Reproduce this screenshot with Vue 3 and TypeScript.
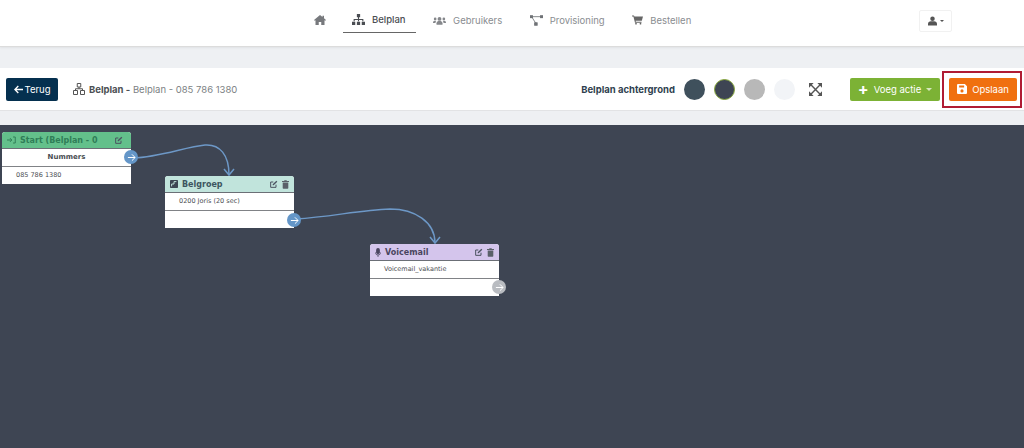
<script setup lang="ts">
const navItems = [
  { key: 'sitemap', label: 'Belplan', active: true },
  { key: 'users', label: 'Gebruikers', active: false },
  { key: 'prov', label: 'Provisioning', active: false },
  { key: 'cart', label: 'Bestellen', active: false },
]
const swatches = [
  { color: '#3f505c', ring: false },
  { color: '#3e4553', ring: true },
  { color: '#b8b8b8', ring: false },
  { color: '#f2f4f7', ring: false },
]
const nodes = [
  { id: 'start', cls: 'n-start', title: 'Start (Belplan - 0', x: 2, y: 7, trash: false, rows: ['Nummers', '085 786 1380'], port: 'blue', portY: 25 },
  { id: 'group', cls: 'n-group', title: 'Belgroep', x: 165, y: 51, trash: true, rows: ['0200 Joris (20 sec)', ''], port: 'blue', portY: 44 },
  { id: 'vm', cls: 'n-vm', title: 'Voicemail', x: 370, y: 119, trash: true, rows: ['Voicemail_vakantie', ''], port: 'grey', portY: 43 },
]
</script>

<template>
  <div class="page">
    <header class="nav">
      <div class="nav-items">
        <svg class="home" viewBox="0 0 24 20" width="12" height="10"><path fill="#77797d" d="M12 0 0 10l1.400 1.600L3 10.300V20h6.500v-6h5v6H21v-9.700l1.600 1.300L24 10l-4-3.300V1.500h-3v2.700z"/></svg>
        <a v-for="item in navItems" :key="item.key" class="nav-item" :class="{ active: item.active }">
          <svg v-if="item.key === 'sitemap'" viewBox="0 0 24 20" width="13" height="11"><path fill="#4a4d52" d="M9 0h6v6h-6zM11 6h2v3h8v4h-2v-2h-6v2h-2v-2H5v2H3V9h8zM0 14h6v6H0zM9 14h6v6H9zM18 14h6v6h-6z"/></svg>
          <svg v-else-if="item.key === 'users'" viewBox="0 0 24 16" width="13" height="9"><g fill="#85878b"><circle cx="12" cy="5" r="3.600"/><path d="M6.500 16v-3c0-3 2.500-4 5.500-4s5.500 1 5.500 4v3z"/><circle cx="4" cy="5" r="2.500"/><circle cx="20" cy="5" r="2.500"/><path d="M0 12c0-2.500 1.500-3.500 4-3.500 1 0 1.600.2 2 .5-1 1-1.400 2-1.400 3.500H0zM24 12c0-2.500-1.500-3.500-4-3.500-1 0-1.600.2-2 .5 1 1 1.400 2 1.400 3.500H24z"/></g></svg>
          <svg v-else-if="item.key === 'prov'" viewBox="0 0 22 18" width="13" height="11"><g fill="#6f7276"><rect x="0" y="0" width="5" height="5"/><rect x="17" y="0" width="5" height="5"/><rect x="7" y="12" width="6" height="6" rx="1"/></g><path d="M3 2.500h16M3 3l7 11" stroke="#6f7276" stroke-width="1.400" fill="none"/></svg>
          <svg v-else viewBox="0 0 22 18" width="11" height="10"><path fill="#666" d="M0 0h4l.8 2H22l-2.400 8.500H7.200l.5 2H19v2H6L2.800 2H0z"/><circle cx="8" cy="16.300" r="1.700" fill="#666"/><circle cx="17" cy="16.300" r="1.700" fill="#666"/></svg>
          <span>{{ item.label }}</span>
        </a>
      </div>
      <div class="user-btn">
        <svg viewBox="0 0 14 14" width="9" height="10"><circle cx="7" cy="3.500" r="3.500" fill="#555"/><path fill="#555" d="M0 14v-2.500C0 9 2 7.500 4.500 7.500h5C12 7.500 14 9 14 11.500V14z"/></svg>
        <span class="caret small"></span>
      </div>
    </header>

    <section class="toolbar">
      <button class="back">
        <svg viewBox="0 0 10 10" width="9" height="9"><path fill="none" stroke="#fff" stroke-width="1.500" d="M10 5H1M4.800 1.200 1 5l3.800 3.800"/></svg>
        Terug
      </button>
      <svg class="net" viewBox="0 0 24 24" width="12" height="12"><path fill="none" stroke="#555" stroke-width="2" d="M8.500 1h7v7h-7zM1 15h8v8H1zM15 15h8v8h-8zM12 8v3.500M5 15v-3.500h14V15"/></svg>
      <span class="crumb"><b>Belplan -</b> Belplan - 085 786 1380</span>
      <div class="spacer"></div>
      <span class="bg-label">Belplan achtergrond</span>
      <div class="swatches">
        <span v-for="s in swatches" :key="s.color" class="swatch" :class="{ ring: s.ring }" :style="{ background: s.color }"></span>
      </div>
      <svg class="expand" viewBox="0 0 14 14" width="13" height="13"><path fill="none" stroke="#555" stroke-width="1.500" d="M2 2l10 10M12 2 2 12"/><path fill="#555" d="M0 0h5L0 5zM14 0v5L9 0zM0 14V9l5 5zM14 14H9l5-5z"/></svg>
      <button class="add"><span class="plus">+</span> Voeg actie <span class="caret"></span></button>
      <div class="save-frame">
        <button class="save">
          <svg viewBox="0 0 14 14" width="10" height="10"><path fill="#fff" fill-rule="evenodd" d="M1.500 0H11l3 3v9.500A1.500 1.500 0 0 1 12.500 14h-11A1.500 1.500 0 0 1 0 12.500v-11A1.500 1.500 0 0 1 1.500 0zM3 2v3h7V2zm4 5.500a2.200 2.200 0 1 0 0 4.400 2.200 2.200 0 0 0 0-4.400z"/></svg>
          Opslaan
        </button>
      </div>
    </section>

    <main class="canvas">
      <svg class="wires" width="1024" height="323">
        <g fill="none" stroke="#6d98c7" stroke-width="1.500">
          <path d="M133 33C160 32 185 22 205 20 220 19 229 30 229 50"/>
          <path d="M224 44 229 50 234 44"/>
          <path d="M296 94C330 92 360 85 390 84 415 84 435 97 435 118"/>
          <path d="M430 112 435 118 440 112"/>
        </g>
      </svg>
      <article v-for="n in nodes" :key="n.id" class="node" :class="n.cls" :style="{ left: n.x + 'px', top: n.y + 'px' }">
        <div class="node-head">
          <svg v-if="n.id === 'start'" class="nicon" viewBox="0 0 12 10" width="9" height="8"><path fill="none" stroke="#2f7d57" stroke-width="1.300" d="M0 5h6M4 2.500 6.500 5 4 7.500M8 1h3v8H8"/></svg>
          <svg v-else-if="n.id === 'group'" class="nicon" viewBox="0 0 10 10" width="8" height="8"><rect width="10" height="10" rx="1" fill="#3e4553"/><path d="M2 8V5h3V2h3" stroke="#c1e4dc" stroke-width="1.200" fill="none"/></svg>
          <svg v-else class="nicon" viewBox="0 0 8 12" width="6" height="9"><rect x="1.500" width="5" height="8" rx="2.500" fill="#4a4560"/><path d="M0 5.500c0 5 8 5 8 0M4 9v3" stroke="#4a4560" fill="none"/></svg>
          <span class="node-title">{{ n.title }}</span>
          <span class="node-tools">
            <svg viewBox="0 0 12 12" width="8" height="8"><path fill="none" stroke="#4b5260" stroke-width="1.500" d="M9 7v4H1V3h4"/><path fill="#4b5260" d="M4 6.500 9.500 1 11 2.500 5.500 8H4z"/></svg>
            <svg v-if="n.trash" viewBox="0 0 10 12" width="7" height="9"><path fill="#5a6069" d="M3.500 0h3l.5 1h3v1.300H0V1h3zM1 3h8v8a1 1 0 0 1-1 1H2a1 1 0 0 1-1-1z"/></svg>
          </span>
        </div>
        <div v-for="(row, i) in n.rows" :key="i" class="node-row" :class="{ bold: row === 'Nummers', indent: row !== 'Nummers' }">{{ row }}</div>
        <span class="port" :class="n.port" :style="{ top: n.portY + 'px' }">
          <svg viewBox="0 0 10 10" width="9" height="9"><path fill="none" stroke="#fff" stroke-width="1.100" d="M1 5h8M5.500 1.500 9 5 5.500 8.500"/></svg>
        </span>
      </article>
    </main>
  </div>
</template>

<style>
html, body { margin: 0; background: #eef0f3; }
</style>

<style scoped>
.page {
  width: 1024px;
  height: 448px;
  overflow: hidden;
  display: flex;
  flex-direction: column;
  font-family: Inter, "Liberation Sans", sans-serif;
  background: #eef0f3;
}
.nav {
  position: relative;
  height: 46px;
  flex: none;
  background: #fff;
  border-bottom: 1px solid #dcdcdc;
  box-shadow: 0 1px 2px rgba(0, 0, 0, .06);
  display: flex;
  padding-left: 314px;
}
.nav-items { display: flex; align-items: flex-start; height: 33px; }
.home { margin-top: 15px; margin-right: 17px; }
.nav-item {
  display: flex;
  align-items: center;
  gap: 7px;
  height: 33px;
  padding: 7px 10px 0 9px;
  box-sizing: border-box;
  font-size: 9.500px;
  color: #8a8d91;
  margin-right: 8.500px;
}
.nav-item.active { color: #4a4d52; border-bottom: 1px solid #666; font-weight: 500; }
.user-btn {
  position: absolute;
  left: 919px;
  top: 10px;
  width: 33px;
  height: 22px;
  border: 1px solid #f1f1f1;
  border-radius: 2px;
  box-sizing: border-box;
  display: flex;
  align-items: center;
  justify-content: center;
  gap: 3px;
}
.caret {
  display: inline-block;
  border-top: 3px solid currentColor;
  border-left: 3px solid transparent;
  border-right: 3px solid transparent;
  vertical-align: 2px;
}
.caret.small { color: #555; border-width: 2px 2px 0; }
.toolbar {
  margin-top: 21px;
  height: 42px;
  flex: none;
  background: #fff;
  border-bottom: 1px solid #e2e3e5;
  display: flex;
  align-items: center;
  padding-left: 6px;
}
button {
  font-family: inherit;
  border: 0;
  padding: 0;
  color: #fff;
  display: flex;
  align-items: center;
  justify-content: center;
}
.back {
  width: 52px;
  height: 23px;
  background: #05304f;
  border-radius: 2px;
  font-size: 9.500px;
  gap: 2px;
}
.net { margin-left: 15px; }
.crumb { margin-left: 4px; font-size: 9.500px; color: #7c7f83; }
.crumb b { color: #4c4f53; font-weight: 700; }
.spacer { flex: 1; }
.bg-label { font-size: 9.500px; font-weight: 700; color: #2f3f4f; }
.swatches { display: flex; gap: 9px; margin-left: 9px; margin-right: 14px; }
.swatch { width: 21px; height: 21px; border-radius: 50%; box-sizing: border-box; }
.swatch.ring { border: 1.500px solid #86a63a; }
.add {
  margin-left: 28px;
  width: 90px;
  height: 23px;
  background: #7cb235;
  border-radius: 2px;
  font-size: 9.500px;
  gap: 5px;
}
.plus { font-size: 16px; font-weight: 700; line-height: 1; }
.add .caret { color: #d7e8bf; margin-left: 0; }
.save-frame {
  margin-left: 2px;
  margin-right: 2px;
  width: 80px;
  height: 37px;
  border: 2px solid #b01c34;
  box-sizing: border-box;
  display: flex;
  align-items: center;
  padding-left: 5px;
}
.save {
  width: 68px;
  height: 23px;
  background: #f0700f;
  border-radius: 2px;
  font-size: 9.500px;
  gap: 5px;
}
.canvas {
  position: relative;
  margin-top: 14px;
  flex: 1;
  background: #3e4553;
}
.wires { position: absolute; left: 0; top: 0; }
.node {
  position: absolute;
  width: 129px;
  height: 52px;
  background: #fff;
  border-radius: 3px 3px 0 0;
  font-family: "DejaVu Sans", sans-serif;
  display: flex;
  flex-direction: column;
}
.node-head {
  height: 17px;
  flex: none;
  display: flex;
  align-items: center;
  gap: 4px;
  padding: 0 5px;
  border-radius: 3px 3px 0 0;
  border-bottom: 1px solid #6b6f76;
  box-sizing: border-box;
  font-size: 8px;
  font-weight: 700;
}
.n-start .node-head { background: #63c08b; color: #2f7d57; padding-right: 8px; }
.n-group .node-head { background: #c1e4dc; color: #3d5660; }
.n-vm .node-head { background: #d4c5ec; color: #4a4560; }
.node-title { white-space: nowrap; }
.node-tools { margin-left: auto; display: flex; gap: 4px; align-items: center; }
.node-row {
  height: 17.500px;
  flex: none;
  display: flex;
  align-items: center;
  box-sizing: border-box;
  font-size: 6.500px;
  color: #4a4d52;
  border-bottom: 1px solid #808286;
}
.node-row:last-of-type { border-bottom: 0; }
.node-row.indent { padding-left: 14px; }
.node-row.bold { justify-content: center; font-weight: 700; font-size: 7px; }
.port {
  position: absolute;
  right: -7px;
  width: 14px;
  height: 14px;
  transform: translateY(-7px);
  border-radius: 50%;
  display: flex;
  align-items: center;
  justify-content: center;
}
.port.blue { background: #6496c8; }
.port.grey { background: #b9bcc1; }
</style>
